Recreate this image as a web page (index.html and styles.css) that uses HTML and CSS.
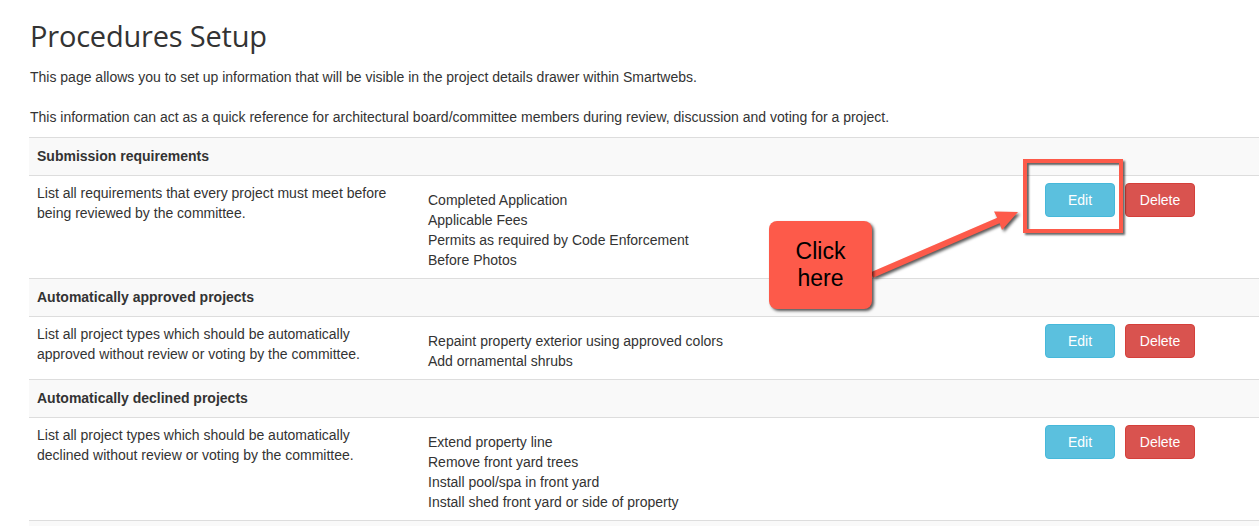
FILE: index.html
```html
<!DOCTYPE html>
<html>
<head>
<meta charset="utf-8">
<link rel="stylesheet" href="styles.css">
</head>
<body>
<div class="page">
  <h1 class="title">Procedures Setup</h1>
  <p class="intro">This page allows you to set up information that will be visible in the project details drawer within Smartwebs.</p>
  <p class="intro second">This information can act as a quick reference for architectural board/committee members during review, discussion and voting for a project.</p>

  <table class="proc">
    <colgroup>
      <col class="c-desc">
      <col class="c-items">
      <col class="c-actions">
    </colgroup>
    <tbody>
      <tr class="head"><th colspan="3">Submission requirements</th></tr>
      <tr class="body">
        <td class="desc">List all requirements that every project must meet before being reviewed by the committee.</td>
        <td class="items">Completed Application<br>Applicable Fees<br>Permits as required by Code Enforcement<br>Before Photos</td>
        <td class="actions"><div class="btns"><button class="btn edit">Edit</button><button class="btn del">Delete</button></div></td>
      </tr>
      <tr class="head"><th colspan="3">Automatically approved projects</th></tr>
      <tr class="body">
        <td class="desc">List all project types which should be automatically approved without review or voting by the committee.</td>
        <td class="items">Repaint property exterior using approved colors<br>Add ornamental shrubs</td>
        <td class="actions"><div class="btns"><button class="btn edit">Edit</button><button class="btn del">Delete</button></div></td>
      </tr>
      <tr class="head"><th colspan="3">Automatically declined projects</th></tr>
      <tr class="body">
        <td class="desc">List all project types which should be automatically declined without review or voting by the committee.</td>
        <td class="items">Extend property line<br>Remove front yard trees<br>Install pool/spa in front yard<br>Install shed front yard or side of property</td>
        <td class="actions"><div class="btns"><button class="btn edit">Edit</button><button class="btn del">Delete</button></div></td>
      </tr>
      <tr class="head"><th colspan="3">&nbsp;</th></tr>
    </tbody>
  </table>
</div>

<svg class="annot" width="1259" height="526" viewBox="0 0 1259 526">
  <polygon class="arrow" points="870.8,272.3 997.2,217.7 994,211.5 1018,212 1002,229.9 999.6,223.3 873.2,277.7"/>
</svg>
<div class="focus-box"></div>
<div class="callout">Click<br>here</div>
</body>
</html>
```

FILE: styles.css
```css
html, body {
  margin: 0;
  padding: 0;
  background: #ffffff;
  overflow: hidden;
}
body {
  font-family: "Liberation Sans", Arial, sans-serif;
  font-size: 14px;
  line-height: 20px;
  color: #333333;
  width: 1259px;
  height: 526px;
  position: relative;
}
.page {
  padding-left: 29px;
}
.title {
  font-family: "Open Sans", "Noto Sans", sans-serif;
  font-weight: 400;
  font-size: 29px;
  line-height: 34px;
  margin: 19px 0 0 1px;
  color: #333333;
  letter-spacing: -0.2px;
}
.intro {
  margin: 14px 0 0 1px;
}
.intro.second {
  margin-top: 20px;
}
.proc {
  margin-top: 10px;
  width: 1230px;
  border-collapse: collapse;
  table-layout: fixed;
}
.c-desc { width: 391px; }
.c-items { width: 617px; }
.c-actions { width: 222px; }
.proc th {
  background: #f9f9f9;
  border-top: 1px solid #dddddd;
  text-align: left;
  font-weight: bold;
  padding: 8px 8px 9px 8px;
}
.proc td {
  border-top: 1px solid #dddddd;
  vertical-align: top;
  padding: 8px;
}
.proc td.desc {
  padding-top: 7px;
  padding-right: 30px;
}
.proc td.items {
  padding-top: 14px;
}
.proc td.actions {
  padding-top: 7px;
}
.btns {
  display: flex;
  gap: 10px;
}
.btn {
  width: 70px;
  height: 34px;
  font-family: "Liberation Sans", Arial, sans-serif;
  font-size: 14px;
  line-height: 20px;
  color: #ffffff;
  border-radius: 4px;
  border: 1px solid transparent;
  padding: 6px 0;
  text-align: center;
}
.btn.edit {
  background: #5bc0de;
  border-color: #46b8da;
}
.btn.del {
  background: #d9534f;
  border-color: #d43f3a;
}
.annot {
  position: absolute;
  left: 0;
  top: 0;
  pointer-events: none;
}
.arrow {
  fill: #fd5a4a;
  filter: drop-shadow(2px 2px 1.5px rgba(0, 0, 0, 0.65));
}
.focus-box {
  position: absolute;
  left: 1023px;
  top: 159px;
  width: 92px;
  height: 66px;
  border: 4px solid #fd5a4a;
  box-shadow: 2px 2px 2px rgba(0, 0, 0, 0.6), inset 2px 2px 2px rgba(0, 0, 0, 0.6);
}
.callout {
  position: absolute;
  left: 769px;
  top: 221px;
  width: 103px;
  height: 88px;
  box-sizing: border-box;
  padding-top: 17px;
  background: #fd5a4a;
  border-radius: 8px;
  box-shadow: 2px 2px 3px rgba(0, 0, 0, 0.65);
  color: #000000;
  font-family: "Liberation Sans", Arial, sans-serif;
  font-size: 23px;
  line-height: 27px;
  text-align: center;
}
```
